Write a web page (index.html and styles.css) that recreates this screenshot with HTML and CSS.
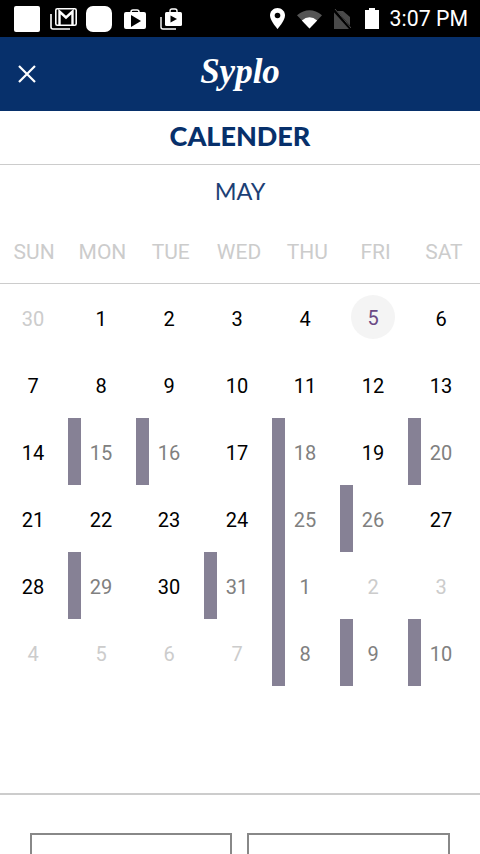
FILE: index.html
```html
<!DOCTYPE html>
<html lang="en">
<head>
    <meta charset="UTF-8">
    <title>Calender</title>
    <link rel="stylesheet" href="styles.css">
</head>
<body>

<div class="statusBar">
    <div class="statusLeft">
        <span class="squareIcon"></span>
        <svg class="notifyIcon" width="27" height="24" viewBox="0 0 27 24">
            <path d="M1 7v13q0 2 2 2h17" fill="none" stroke="#fff" stroke-width="1.600"/>
            <rect x="5.800" y="1.800" width="20.400" height="16.400" rx="1.500" fill="none" stroke="#fff" stroke-width="1.600"/>
            <path d="M9.500 18V4.500l6.500 6 6.500-6V18" fill="none" stroke="#fff" stroke-width="2.400"/>
        </svg>
        <span class="roundIcon"></span>
        <svg class="notifyIcon bagIcon" width="22" height="20" viewBox="0 0 22 20">
            <path d="M7 4V3q0-2 2-2h4q2 0 2 2v1" fill="none" stroke="#fff" stroke-width="1.500"/>
            <rect y="3" width="22" height="17" rx="2" fill="#fff"/>
            <path d="M7 6l10 6-10 6z" fill="#000"/>
        </svg>
        <svg class="notifyIcon stackIcon" width="22" height="22" viewBox="0 0 22 22">
            <path d="M1 9v10q0 2 2 2h13" fill="none" stroke="#fff" stroke-width="1.400"/>
            <path d="M10 4V3q0-2 2-2h3q2 0 2 2v1" fill="none" stroke="#fff" stroke-width="1.400"/>
            <rect x="5" y="4" width="17" height="14" rx="1.500" fill="#fff"/>
            <path d="M10.500 7.500l6.500 3.500-6.500 3.500z" fill="#000"/>
        </svg>
    </div>
    <div class="statusRight">
        <svg class="pinIcon" width="15" height="21" viewBox="0 0 15 21">
            <path d="M7.500 0C3.400 0 0 3.300 0 7.500 0 12.500 7.500 21 7.500 21S15 12.500 15 7.500C15 3.300 11.600 0 7.500 0z" fill="#fff"/>
            <circle cx="7.500" cy="7.500" r="2.800" fill="#000"/>
        </svg>
        <svg class="wifiIcon" width="25" height="20" viewBox="0 0 26 20">
            <path d="M0 6Q13-4 26 6L13 20z" fill="#555"/>
            <path d="M5 11.500Q13 5 21 11.500L13 20z" fill="#fff"/>
        </svg>
        <svg class="simIcon" width="18" height="21" viewBox="0 0 18 21">
            <path d="M1 3h9l7 6v12H1z" fill="#4a4a4a"/>
            <path d="M0 1l18 20" stroke="#000" stroke-width="3"/>
            <path d="M2 1l16 19" stroke="#4a4a4a" stroke-width="1"/>
        </svg>
        <svg class="batteryIcon" width="14" height="21" viewBox="0 0 14 21">
            <path d="M4 0h6v2h4v19H0V2h4z" fill="#fff"/>
        </svg>
        <span class="clock">3:07 PM</span>
    </div>
</div>

<header class="appBar">
    <svg class="closeIcon" width="18" height="18" viewBox="0 0 18 18">
        <path d="M1 1l16 16M17 1L1 17" stroke="#fff" stroke-width="2.200" fill="none"/>
    </svg>
    <span class="logo">Syplo</span>
</header>

<h1 class="pageTitle">CALENDER</h1>
<div class="monthName">MAY</div>

<div class="weekdays">
    <span>SUN</span><span>MON</span><span>TUE</span><span>WED</span><span>THU</span><span>FRI</span><span>SAT</span>
</div>

<div class="days">
    <span class="day faded">30</span><span class="day">1</span><span class="day">2</span><span class="day">3</span><span class="day">4</span><span class="day today"><b>5</b></span><span class="day">6</span>
    <span class="day">7</span><span class="day">8</span><span class="day">9</span><span class="day">10</span><span class="day">11</span><span class="day">12</span><span class="day">13</span>
    <span class="day">14</span><span class="day booked">15</span><span class="day booked">16</span><span class="day">17</span><span class="day booked">18</span><span class="day">19</span><span class="day booked">20</span>
    <span class="day">21</span><span class="day">22</span><span class="day">23</span><span class="day">24</span><span class="day booked">25</span><span class="day booked">26</span><span class="day">27</span>
    <span class="day">28</span><span class="day booked">29</span><span class="day">30</span><span class="day booked">31</span><span class="day booked">1</span><span class="day faded">2</span><span class="day faded">3</span>
    <span class="day faded">4</span><span class="day faded">5</span><span class="day faded">6</span><span class="day faded">7</span><span class="day booked">8</span><span class="day booked">9</span><span class="day booked">10</span>
</div>

<div class="bottomPanel">
    <div class="timeBox"></div>
    <div class="timeBox"></div>
</div>

</body>
</html>
```

FILE: styles.css
```css
* {
    box-sizing: border-box;
}
html, body {
    margin: 0;
    height: 854px;
    overflow: hidden;
}
body {
    display: flex;
    flex-direction: column;
    background-color: #fff;
    font-family: Roboto, sans-serif;
}
.statusBar {
    display: flex;
    justify-content: space-between;
    align-items: center;
    height: 37px;
    flex: none;
    background-color: #000;
    color: #fff;
}
.statusLeft {
    display: flex;
    align-items: center;
    margin-left: 14px;
}
.squareIcon {
    width: 26px;
    height: 26px;
    background-color: #fff;
    border-radius: 2px;
}
.roundIcon {
    width: 26px;
    height: 26px;
    margin-left: 9px;
    background-color: #fff;
    border-radius: 7px;
}
.notifyIcon {
    margin-left: 10px;
}
.bagIcon {
    margin-left: 12px;
}
.stackIcon {
    margin-left: 14px;
}
.statusRight {
    display: flex;
    align-items: center;
    margin-right: 12px;
}
.wifiIcon {
    margin-left: 12px;
}
.simIcon {
    margin-left: 11px;
}
.batteryIcon {
    margin-left: 14px;
}
.clock {
    margin-left: 11px;
    font-size: 21.300px;
}
.appBar {
    display: flex;
    align-items: center;
    justify-content: center;
    position: relative;
    height: 74px;
    flex: none;
    background-color: #07306b;
}
.closeIcon {
    position: absolute;
    left: 18px;
    top: 28px;
}
.logo {
    color: #fff;
    font-family: "Liberation Serif", serif;
    font-style: italic;
    font-weight: bold;
    font-size: 35px;
    margin-top: -4px;
}
.pageTitle {
    margin: 0;
    height: 54px;
    flex: none;
    border-bottom: 1px solid #ccc;
    line-height: 49px;
    text-align: center;
    font-family: Lato, sans-serif;
    font-size: 27px;
    font-weight: 900;
    color: #07306b;
}
.monthName {
    height: 54px;
    flex: none;
    line-height: 52px;
    text-align: center;
    font-family: Lato, sans-serif;
    font-size: 23.500px;
    color: #1c4075;
}
.weekdays {
    display: grid;
    grid-template-columns: repeat(7, 68.3px);
    height: 65px;
    flex: none;
    border-bottom: 1px solid #ccc;
    font-size: 21px;
    color: #ccc;
    text-align: center;
    line-height: 66px;
}
.days {
    display: grid;
    grid-template-columns: repeat(7, 68px);
    grid-auto-rows: 67px;
    flex: none;
}
.day {
    display: flex;
    align-items: center;
    justify-content: center;
    padding: 2px 2px 0 0;
    font-size: 20px;
    color: #000;
}
.faded {
    color: #ccc;
}
.booked {
    color: #808080;
    box-shadow: inset 13px 0 0 #868195;
}
.today {
    padding-top: 0;
}
.today b {
    display: flex;
    align-items: center;
    justify-content: center;
    width: 44px;
    height: 44px;
    margin-top: -1px;
    padding-top: 2px;
    border-radius: 50%;
    background-color: #f4f4f4;
    color: #6b4a85;
    font-weight: normal;
}
.bottomPanel {
    display: grid;
    grid-template-columns: 202px 203px;
    gap: 15px;
    height: 61px;
    margin-top: 107px;
    padding: 38px 30px 0;
    border-top: 2px solid #ccc;
    flex: none;
}
.timeBox {
    height: 60px;
    border: 2px solid #888;
}
```
